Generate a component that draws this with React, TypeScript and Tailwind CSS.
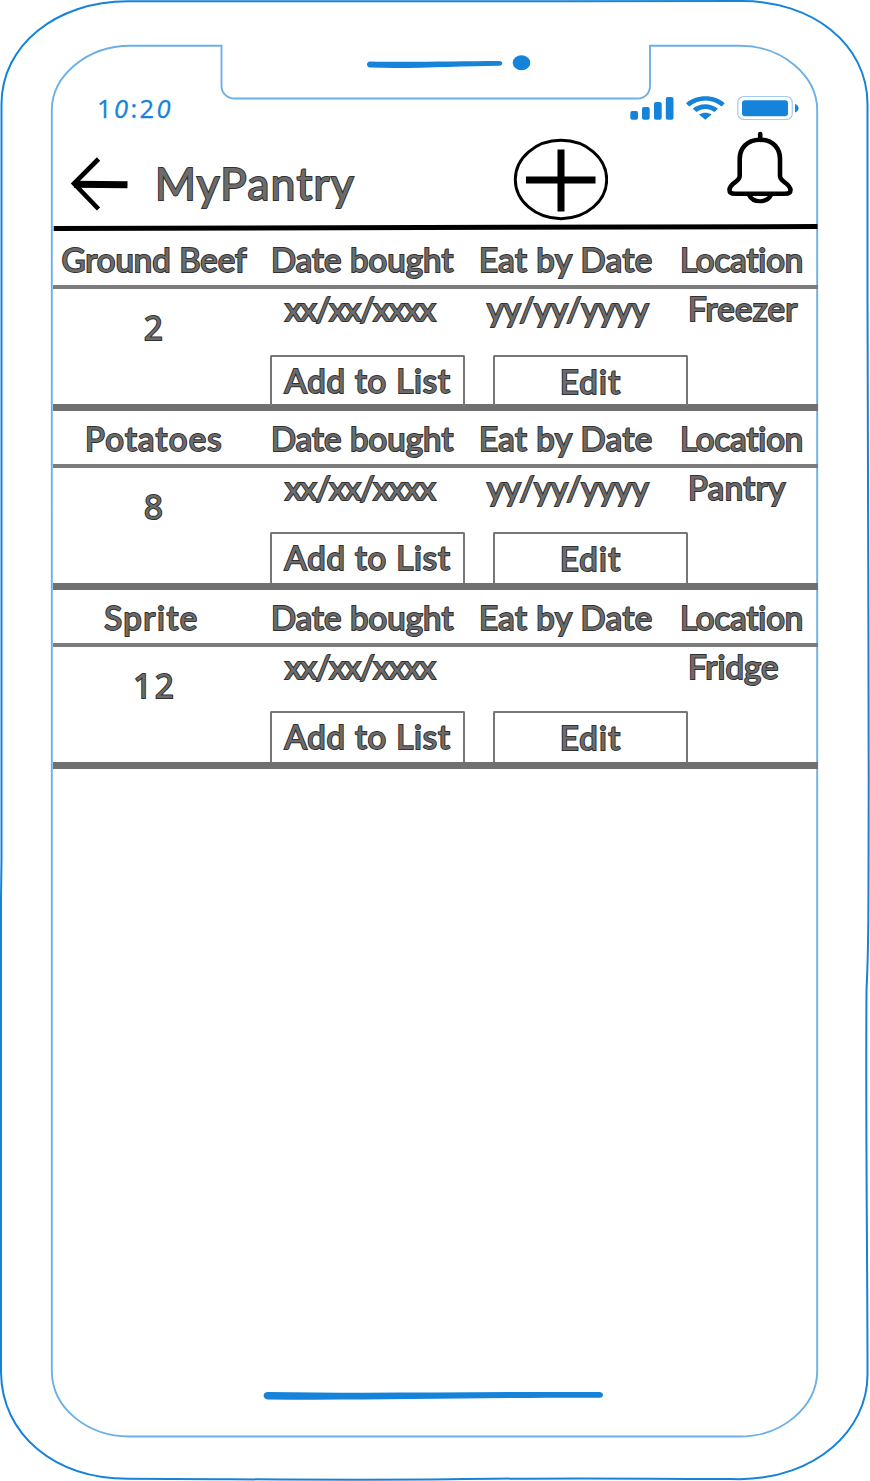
import React from "react";

const ink =
  "font-['Lato',sans-serif] text-[#6c6c6c] [-webkit-text-stroke:2px_#303030] [paint-order:stroke_fill] [font-variant-ligatures:none] whitespace-pre leading-none text-[33px]";
const digits =
  "font-['Open_Sans',sans-serif] text-[#6c6c6c] [-webkit-text-stroke:2px_#303030] [paint-order:stroke_fill] leading-none text-[33px]";

type Item = {
  name: string;
  nameClass: string;
  count: string;
  bought: string;
  eatBy: string;
  location: string;
  locationClass: string;
  gapClass: string;
};

const items: Item[] = [
  { name: "Ground Beef", nameClass: "tracking-[0px]", count: "2", bought: "xx/xx/xxxx", eatBy: "yy/yy/yyyy", location: "Freezer", locationClass: "tracking-[0.3px]", gapClass: "h-[66px]" },
  { name: "Potatoes", nameClass: "tracking-[1.3px]", count: "8", bought: "xx/xx/xxxx", eatBy: "yy/yy/yyyy", location: "Pantry", locationClass: "tracking-[0.5px]", gapClass: "h-[64px]" },
  { name: "Sprite", nameClass: "tracking-[1.6px] -ml-[5px]", count: "12", bought: "xx/xx/xxxx", eatBy: "", location: "Fridge", locationClass: "tracking-[0.1px]", gapClass: "h-[64px]" },
];

function DeviceOutline() {
  return (
    <svg className="pointer-events-none absolute inset-0" width="870" height="1481" viewBox="0 0 870 1481" fill="none">
      <path
        d="M128 1.3H560L742 1C812 1 867.5 44 867.5 104V300C867 480 869 620 868.700 780C868.500 920 868.500 950 866.500 990C865.500 1120 867.500 1260 867.500 1375C867.500 1430 816 1478.500 740 1479.200C660 1478.500 560 1477.500 450 1479.300C330 1480.500 240 1479 128 1478.700C55 1478.500 1.500 1435 1 1372V898L1.500 860V104C1.500 46 55 1.300 128 1.300Z"
        stroke="#1583da"
        strokeWidth="2"
      />
      <path
        d="M130 45.700H221.500V86C221.500 93 227 98.500 235 98.500H637C645 98.500 650 93 650 86V45.700H740C783 46 817 76 817.200 110V1371C817 1406 783 1436.500 740 1436.500H130C87 1436.500 52 1408 51.800 1371V110C52 75 88 45.700 130 45.700Z"
        stroke="#6cb0e6"
        strokeWidth="1.900"
      />
    </svg>
  );
}

function StatusBar() {
  return (
    <div className="flex h-[33px] items-start justify-between pr-[18px] pl-[44px]">
      <div className="flex font-['Open_Sans',sans-serif] text-[25.5px] leading-[26px] tracking-[2.4px] text-[#1583da] [-webkit-text-stroke:0.3px_#1583da]">
        <span>1</span>
        <i>0</i>
        <span>:2</span>
        <i>0</i>
      </div>
      <svg width="170" height="26" viewBox="630 95 170 26" fill="#1583da">
        <rect x="630.300" y="111" width="7.700" height="8.700" rx="2" />
        <rect x="642" y="107" width="7.700" height="12.700" rx="2" />
        <rect x="654" y="102" width="7.700" height="17.700" rx="2" />
        <rect x="665.800" y="97" width="7.700" height="22.700" rx="2" />
        <path d="M686 103.200C696 94 715 94 724.700 103.200L721.700 106.500C712 98.500 699 98.500 689.200 106.500Z" />
        <path d="M692.700 108.800C699 102.700 711 102.700 718 108.800L714.500 112C709 108 702 108 696.500 112Z" />
        <path d="M699 114.500C703 112 708 112 711.700 114.500L705.300 119.700Z" />
        <rect x="737.800" y="96.500" width="54.500" height="23" rx="6" fill="none" stroke="#9ecbef" strokeWidth="1.200" />
        <rect x="742" y="100.300" width="46" height="16" rx="3" />
        <path d="M795 104C799.800 105.500 799.800 111 795 112.500Z" />
      </svg>
    </div>
  );
}

function Header() {
  return (
    <header className="flex h-[103px] items-start">
      <button aria-label="Back" className="mt-[27px] ml-[16px]">
        <svg width="62" height="56" viewBox="69 155 62 56" fill="none" stroke="#000">
          <path d="M98.500 159L74 183.500L98.500 209" strokeWidth="4.600" />
          <path d="M74 184.200L127.500 184.800" strokeWidth="7" />
        </svg>
      </button>
      <h1 className={`${ink} mt-[33px] ml-[24px] w-[240px] !text-[44px] tracking-[1.4px]`}>MyPantry</h1>
      <button aria-label="Add item" className="mt-[10px] ml-[117px]">
        <svg width="96" height="84" viewBox="512 138 96 84" fill="none" stroke="#000">
          <ellipse cx="561" cy="179.500" rx="45.700" ry="39.200" strokeWidth="2.900" />
          <path d="M526 180H595.500M561 149.500V211.500" strokeWidth="7" />
        </svg>
      </button>
      <button aria-label="Notifications" className="mt-[2px] ml-[116px]">
        <svg width="70" height="74" viewBox="724 130 70 74" fill="none" stroke="#000" strokeWidth="4.600" strokeLinecap="round" strokeLinejoin="round">
          <path d="M760.200 134V140" />
          <path d="M760 139.700C747 139.700 739.700 148.500 739.700 159V176C739.700 182 729.500 183 729.500 190C729.500 193 731.500 193.700 735 193.700H785C788.500 193.700 790.500 193 790.500 190C790 183 780 182 780 176V159C780 148.500 773 139.700 760 139.700Z" />
          <path d="M749 195C753 203.300 767 203.300 771 195" strokeWidth="4.200" />
        </svg>
      </button>
    </header>
  );
}

function PantryRow({ item }: { item: Item }) {
  return (
    <section className="h-[179px] border-b-[7px] border-[#707070]">
      <div className="grid h-[57px] grid-cols-[202px_16px_208px_201px_1fr] border-b-[4px] border-[#7c7c7c] pt-[11px]">
        <span className={`${ink} text-center ${item.nameClass}`}>{item.name}</span>
        <span />
        <span className={`${ink} tracking-[0.1px]`}>Date bought</span>
        <span className={`${ink} tracking-[0.5px]`}>Eat by Date</span>
        <span className={`${ink} tracking-[0px]`}>Location</span>
      </div>
      <div className="flex h-[115px]">
        <div className={`${digits} w-[204px] pt-[22px] text-center tracking-[3px]`}>{item.count}</div>
        <div className="-ml-[2px] flex-1">
          <div className={`grid ${item.gapClass} grid-cols-[202px_202px_1fr] pt-[3px] pl-[30px]`}>
            <span className={`${ink} tracking-[-1.1px]`}>{item.bought}</span>
            <span className={`${ink} tracking-[-0.2px]`}>{item.eatBy}</span>
            <span className={`${ink} -ml-px ${item.locationClass}`}>{item.location}</span>
          </div>
          <div className="flex h-[51px] gap-[28px] pl-[15px]">
            <button className={`${ink} flex w-[195px] justify-center rounded-t-[2px] border-2 border-b-0 border-[#777] pt-[7px] tracking-[0.8px]`}>Add to List</button>
            <button className={`${ink} flex w-[195px] justify-center rounded-t-[2px] border-2 border-b-0 border-[#777] pt-[8px] tracking-[1.2px]`}>Edit</button>
          </div>
        </div>
      </div>
    </section>
  );
}

export default function App() {
  return (
    <div className="relative flex h-[1481px] w-[870px] flex-col overflow-hidden bg-white">
      <DeviceOutline />
      <div className="flex h-[95px] items-start justify-center pt-[53px] pl-[28px]">
        <svg width="168" height="20" viewBox="365 53 168 20" fill="#1583da">
          <path d="M370 61.500C410 62.500 460 61 499 61C503.500 61 503.500 65.500 499 65.700C460 66 410 69 370 67.500C366 67.200 366 61.500 370 61.500Z" />
          <ellipse cx="521.500" cy="62.700" rx="8.800" ry="7.500" />
        </svg>
      </div>
      <main className="relative ml-[53px] flex w-[765px] flex-1 flex-col">
        <StatusBar />
        <Header />
        <div className="-mt-[7px] h-[8px]">
          <svg className="block" width="765" height="8" viewBox="0 0 765 8">
            <path d="M0.700 4.500L764.500 2.500" stroke="#000" strokeWidth="5" />
          </svg>
        </div>
        {items.map((item) => (
          <PantryRow key={item.name} item={item} />
        ))}
      </main>
      <div className="flex h-[93px] justify-center pr-[4px]">
        <svg width="344" height="16" viewBox="261 1388 344 16" fill="#1583da">
          <path d="M267 1392C380 1394 480 1391.500 600 1392C604 1392.500 604 1397.500 600 1397.700C480 1397.500 380 1400.500 267 1399.500C262.500 1398.500 262.500 1392.500 267 1392Z" />
        </svg>
      </div>
    </div>
  );
}
